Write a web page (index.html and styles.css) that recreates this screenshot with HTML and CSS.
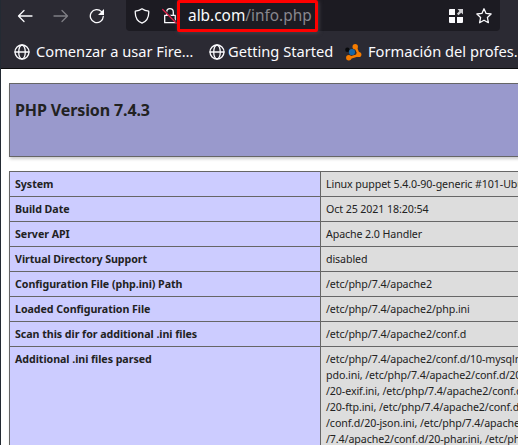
FILE: index.html
```html
<!DOCTYPE html>
<html lang="es">
<head>
<meta charset="utf-8">
<title>phpinfo()</title>
<link rel="stylesheet" href="styles.css">
</head>
<body>
<div class="window">
  <header class="chrome">
    <div class="toolbar">
      <svg class="icon back" viewBox="0 0 16 16"><path d="M15 8H1.500M7 2.500 1.500 8 7 13.500"/></svg>
      <svg class="icon forward" viewBox="0 0 16 16"><path d="M1 8h13.500M9 2.500 14.500 8 9 13.500"/></svg>
      <svg class="icon reload" viewBox="0 0 16 16"><path d="M14.300 8.500A6.500 6.500 0 1 1 12.500 3.600"/><path class="solid" d="M15 1v6H9z"/></svg>
      <div class="urlbar">
        <svg class="icon shield" viewBox="0 0 16 16"><path d="M8 .8C10 2.300 12.500 3 14.700 3.200C15 8 13 13.200 8 15.200C3 13.200 1 8 1.300 3.200C3.500 3 6 2.300 8 .8Z"/></svg>
        <svg class="icon lock" viewBox="0 0 16 16"><path d="M2.700 7.300h10.600v7.400H2.700zM4.700 7V4a3.300 3.300 0 0 1 6.600 0v3"/><path class="gap" d="M1.700 1.500 15.200 15"/><path class="slash" d="M.7 1.500 14.200 15"/></svg>
        <div class="address">alb.com<span class="path">/info.php</span></div>
        <svg class="icon grid" viewBox="0 0 14 14"><path d="M1 0h5v6H0V1a1 1 0 0 1 1-1zM0 8h6v6H1a1 1 0 0 1-1-1zM8 8h6v5a1 1 0 0 1-1 1H8z"/><path class="arrow" d="M8.500 0H14v5.500l-1.800-1.800L9.500 6.300 7.900 4.700l2.500-2.700z"/></svg>
        <svg class="icon star" viewBox="0 0 16 16"><path d="m8 .8 2.100 4.600 5 .6-3.700 3.500 1 5.200L8 12.200l-4.400 2.500 1-5.200L.9 6l5-.6z"/></svg>
      </div>
    </div>
    <nav class="bookmarks">
      <a class="mark first"><svg class="icon globe" viewBox="0 0 16 16"><circle cx="8" cy="8" r="7"/><ellipse cx="8" cy="8" rx="3.300" ry="7"/><path d="M1 8h14"/></svg><span>Comenzar a usar Fire…</span></a>
      <a class="mark second"><svg class="icon globe" viewBox="0 0 16 16"><circle cx="8" cy="8" r="7"/><ellipse cx="8" cy="8" rx="3.300" ry="7"/><path d="M1 8h14"/></svg><span>Getting Started</span></a>
      <a class="mark third"><svg class="molecule" viewBox="0 0 17 17"><path d="M10.500 3 14 11 4 14" fill="none" stroke="#f57c00" stroke-width="2.400"/><circle cx="10.200" cy="2.800" r="2.700" fill="#f57c00"/><circle cx="13.800" cy="10.500" r="2.600" fill="#f57c00"/><circle cx="3.800" cy="13.800" r="2.700" fill="#f57c00"/><circle cx="2.400" cy="5.700" r="2.200" fill="#08090b"/><circle cx="7" cy="8" r="3.100" fill="#1667a8"/></svg><span>Formación del profes…</span></a>
    </nav>
  </header>
  <main class="page">
    <div class="banner"><h1>PHP Version 7.4.3</h1></div>
    <table class="info">
      <tr><th>System</th><td>Linux puppet 5.4.0-90-generic #101-Ubuntu</td></tr>
      <tr><th>Build Date</th><td>Oct 25 2021 18:20:54</td></tr>
      <tr><th>Server API</th><td>Apache 2.0 Handler</td></tr>
      <tr><th>Virtual Directory Support</th><td>disabled</td></tr>
      <tr><th>Configuration File (php.ini) Path</th><td>/etc/php/7.4/apache2</td></tr>
      <tr><th>Loaded Configuration File</th><td>/etc/php/7.4/apache2/php.ini</td></tr>
      <tr><th>Scan this dir for additional .ini files</th><td>/etc/php/7.4/apache2/conf.d</td></tr>
      <tr><th>Additional .ini files parsed</th><td>/etc/php/7.4/apache2/conf.d/10-mysqlnd.ini<br>pdo.ini, /etc/php/7.4/apache2/conf.d/20-ctype<br>/20-exif.ini, /etc/php/7.4/apache2/conf.d/20<br>/20-ftp.ini, /etc/php/7.4/apache2/conf.d/20<br>/conf.d/20-json.ini, /etc/php/7.4/apache2<br>/7.4/apache2/conf.d/20-phar.ini, /etc/php/7.4</td></tr>
    </table>
  </main>
</div>
</body>
</html>
```
FILE: styles.css
```css
* { box-sizing: border-box; }
body {
  margin: 0;
  background: #fff;
  font-family: "Noto Sans", sans-serif;
  color: #222;
}
.window {
  height: 445px;
  overflow: hidden;
  border-left: 1px solid #232a33;
}
.chrome {
  height: 69px;
  background: #2b2a33;
  border-bottom: 1px solid #0c0c0d;
  color: #fbfbfe;
}
.toolbar {
  display: flex;
  align-items: center;
  height: 31px;
  padding-left: 16px;
}
.icon {
  flex: none;
  width: 16px;
  height: 16px;
  fill: none;
  stroke: #fbfbfe;
  stroke-width: 1.3;
  stroke-linecap: round;
  stroke-linejoin: round;
}
.forward { margin-left: 20px; opacity: .4; }
.reload { margin-left: 20px; }
.reload .solid { fill: #fbfbfe; stroke: none; }
.urlbar {
  display: flex;
  align-items: center;
  width: 374px;
  height: 31px;
  margin-left: 21px;
  padding-left: 8px;
  background: #1c1b22;
  border-radius: 0 0 4px 4px;
}
.lock { margin-left: 12px; }
.lock .gap { stroke: #1c1b22; }
.lock .slash { stroke: #e2264d; }
.address {
  position: relative;
  flex: none;
  width: 141px;
  height: 32px;
  margin: 1px 0 0 -1px;
  padding-left: 8px;
  border: 3px solid #f00;
  border-radius: 2px;
  box-shadow: 1px 1px 4px #45434b;
  font-size: 15.4px;
  line-height: 25px;
  white-space: nowrap;
}
.path { color: #88878e; }
.grid {
  width: 14px;
  height: 14px;
  margin-left: 131px;
  fill: #fbfbfe;
  stroke: none;
}
.grid .arrow { fill: #cfcfd3; }
.star { margin-left: 13px; }
.bookmarks {
  display: flex;
  height: 37px;
  padding: 3px 0 0 12.5px;
  font-size: 14.67px;
  line-height: 34px;
  white-space: nowrap;
}
.mark { display: flex; flex: none; align-items: center; height: 36px; }
.mark span { height: 36px; margin-left: 6.5px; }
.first { width: 195px; }
.second { width: 136.5px; }
.second span { margin-left: 3.5px; }
.third span { margin-left: 6px; }
.molecule { width: 17px; height: 17px; }
.page { padding: 14px 0 0 8px; }
.banner {
  width: 934px;
  height: 74px;
  padding: 14px 5px;
  background: #99c;
  border: 1px solid #666;
  box-shadow: 1px 2px 3px #ccc;
}
h1 { margin: 0; font-size: 16px; line-height: 24px; letter-spacing: -.12px; }
.info {
  width: 934px;
  margin-top: 14px;
  border-collapse: collapse;
  font-size: 10.67px;
  line-height: 16px;
  box-shadow: 1px 2px 3px #ccc;
}
th, td {
  padding: 4px 5px;
  border: 1px solid #666;
  vertical-align: baseline;
  text-align: left;
  white-space: nowrap;
}
th { width: 311px; background: #ccf; letter-spacing: -.05px; }
td { background: #ddd; letter-spacing: -.1px; }
```
